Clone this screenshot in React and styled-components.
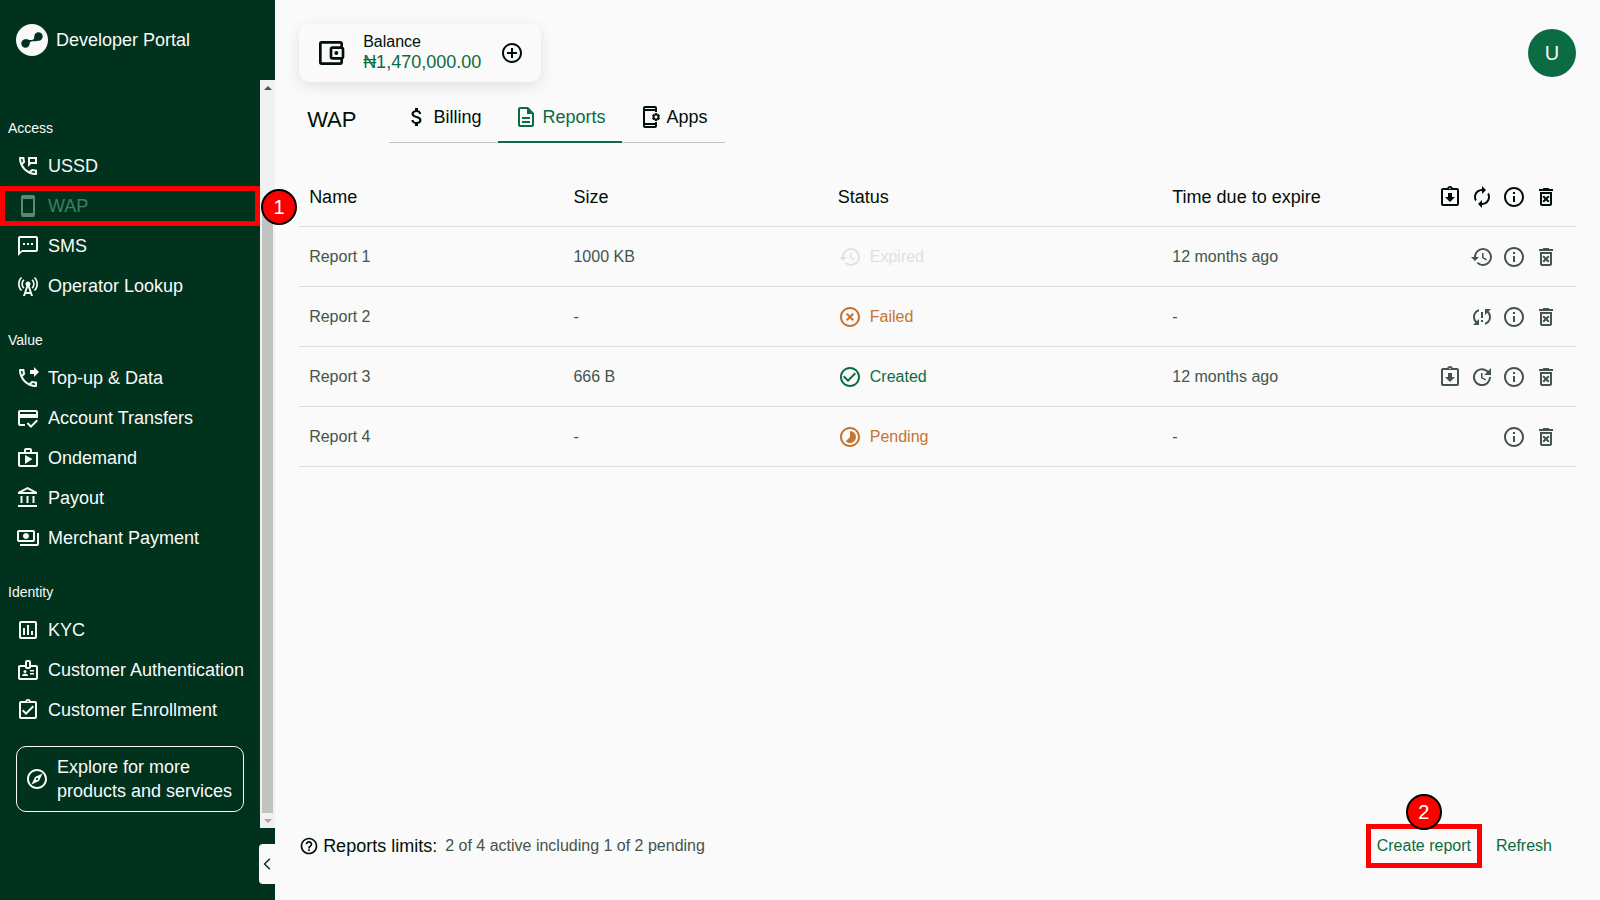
import React from "react";

import styled, { createGlobalStyle } from "styled-components";
import {
  MdOutlinePermPhoneMsg,
  MdOutlineStayCurrentPortrait,
  MdOutlineTextsms,
  MdCellTower,
  MdOutlinePhoneForwarded,
  MdOutlineCreditScore,
  MdOutlineShop,
  MdOutlineAccountBalance,
  MdOutlinePayments,
  MdOutlineAssessment,
  MdOutlineBadge,
  MdOutlineAssignmentTurnedIn,
  MdOutlineExplore,
  MdOutlineAccountBalanceWallet,
  MdAddCircleOutline,
  MdAttachMoney,
  MdOutlineDescription,
  MdOutlineAppSettingsAlt,
  MdOutlineAssignmentReturned,
  MdAutorenew,
  MdInfoOutline,
  MdOutlineDeleteForever,
  MdHistory,
  MdOutlineSyncProblem,
  MdUpdate,
  MdHighlightOff,
  MdCheckCircleOutline,
  MdOutlineTimelapse,
  MdHelpOutline,
  MdOutlineArrowBackIosNew,
} from "react-icons/md";

const GlobalStyle = createGlobalStyle`
  * {
    box-sizing: border-box;
  }

  body {
    margin: 0;
    background-color: #fafafa;
    color: #000f08;
    font-family: "Liberation Sans", Arial, sans-serif;
    font-size: 16px;
  }

  button {
    margin: 0;
    padding: 0;
    border: none;
    background: none;
    color: inherit;
    font: inherit;
    cursor: pointer;
  }

  svg {
    display: block;
    flex-shrink: 0;
  }
`;

const Page = styled.div`
  display: flex;
  min-height: 100vh;
`;

const Sidebar = styled.aside`
  display: flex;
  flex-direction: column;
  flex: 0 0 275px;
  height: 100vh;
  background-color: #00321e;
  color: #fafafa;
`;

const Brand = styled.div`
  display: flex;
  align-items: center;
  gap: 8px;
  flex: 0 0 80px;
  padding: 0 16px;
  font-size: 18px;
`;

const NavArea = styled.div`
  display: flex;
  flex: 1;
  min-height: 0;
`;

const Nav = styled.nav`
  flex: 1;
  min-width: 0;
  padding-top: 14px;
`;

const SectionTitle = styled.h2`
  margin: 0;
  padding: 24px 8px 8px;
  font-size: 14px;
  font-weight: 400;
  line-height: 20px;
`;

const NavList = styled.ul`
  margin: 0;
  padding: 0;
  list-style: none;
`;

const NavItem = styled.li`
  position: relative;
`;

const NavLink = styled.a`
  display: flex;
  align-items: center;
  gap: 8px;
  height: 40px;
  padding: 0 16px;
  color: ${({ $active }) => ($active ? "#3f8062" : "#fafafa")};
  font-size: 18px;
  text-decoration: none;
  white-space: nowrap;
  outline: ${({ $active }) => ($active ? "5px solid #f00" : "none")};
  outline-offset: -5px;

  & svg {
    color: ${({ $active }) => ($active ? "#5f8674" : "inherit")};
  }
`;

const Marker = styled.span`
  position: absolute;
  z-index: 1;
  display: flex;
  align-items: center;
  justify-content: center;
  width: 36px;
  height: 36px;
  border: 2px solid #000;
  border-radius: 50%;
  background-color: #f00;
  color: #fff;
  font-size: 20px;
`;

const NavMarker = styled(Marker)`
  top: 3px;
  left: calc(100% + 1px);
`;

const ButtonMarker = styled(Marker)`
  bottom: calc(100% - 6px);
  left: calc(50% - 18px);
`;

const Explore = styled.button`
  display: flex;
  align-items: center;
  gap: 8px;
  width: calc(100% - 32px);
  margin: 16px;
  padding: 8px;
  border: 1px solid #fafafa;
  border-radius: 10px;
  font-size: 18px;
  line-height: 24px;
  text-align: left;
`;

const ScrollTrack = styled.div`
  display: flex;
  flex-direction: column;
  align-items: center;
  flex: 0 0 15px;
  background-color: #f1f1f1;
`;

const ScrollArrow = styled.span`
  display: flex;
  align-items: center;
  justify-content: center;
  height: 15px;
  color: ${({ $dim }) => ($dim ? "#a3a9a6" : "#4c524f")};
`;

const ScrollThumb = styled.span`
  flex: 1;
  width: 11px;
  margin-top: 112px;
  background-color: #c1c3c1;
`;

const SidebarFooter = styled.div`
  display: flex;
  align-items: flex-start;
  justify-content: flex-end;
  flex: 0 0 72px;
  padding-top: 16px;
`;

const Collapse = styled.button`
  display: flex;
  align-items: center;
  justify-content: center;
  width: 16px;
  height: 40px;
  border-radius: 4px 0 0 4px;
  background-color: #fafafa;
  color: #00321e;
`;

const Main = styled.main`
  display: flex;
  flex-direction: column;
  flex: 1;
  min-width: 0;
  padding: 24px 24px 32px;
`;

const TopBar = styled.header`
  display: flex;
  align-items: center;
  justify-content: space-between;
`;

const BalanceCard = styled.section`
  display: flex;
  align-items: center;
  gap: 16px;
  height: 58px;
  padding: 0 17px 0 16px;
  border-radius: 10px;
  box-shadow: 0 4px 14px rgba(0, 0, 0, 0.1);
`;

const BalanceText = styled.div`
  min-width: 121px;
  padding-bottom: 2px;
  font-size: 16px;
  line-height: 20px;
`;

const Amount = styled.div`
  color: #0b6b43;
  font-size: 18px;
`;

const Avatar = styled.button`
  width: 48px;
  height: 48px;
  border-radius: 50%;
  background-color: #0b6b43;
  color: #fafafa;
  font-size: 20px;
`;

const TitleRow = styled.div`
  display: flex;
  align-items: center;
  gap: 33px;
  margin: 11px 0 24px;
  padding-left: 8px;
`;

const Title = styled.h1`
  margin: 0;
  padding-top: 4px;
  font-size: 22px;
  font-weight: 400;
`;

const Tabs = styled.div`
  display: flex;
  box-shadow: inset 0 -1px #c1c3c1;
`;

const Tab = styled.button`
  display: flex;
  align-items: center;
  gap: 4px;
  height: 50px;
  padding: 0 17px 0 16px;
  border-bottom: 2px solid ${({ $active }) => ($active ? "#0b6b43" : "transparent")};
  color: ${({ $active }) => ($active ? "#0b6b43" : "inherit")};
  font-size: 18px;
`;

const Table = styled.table`
  width: 100%;
  border-collapse: separate;
  border-spacing: 0;
  table-layout: fixed;

  & th,
  & td {
    height: 60px;
    padding: 1px 18px 0 10px;
    border-bottom: 1px solid #dcdddc;
    text-align: left;
  }

  & th {
    font-size: 18px;
    font-weight: 400;
  }

  & td {
    color: #44544c;
  }
`;

const Col = styled.col`
  width: ${({ $width }) => $width};
`;

const Status = styled.div`
  display: flex;
  align-items: center;
  gap: 8px;
  color: ${({ $color }) => $color};
`;

const Actions = styled.div`
  display: flex;
  justify-content: flex-end;
  gap: 8px;
`;

const Footer = styled.footer`
  display: flex;
  align-items: center;
  justify-content: space-between;
  margin-top: auto;
  padding-right: 13px;
`;

const Limits = styled.div`
  display: flex;
  align-items: center;
  gap: 4px;
  font-size: 18px;
`;

const LimitsValue = styled.span`
  margin-left: 4px;
  color: #44544c;
  font-size: 16px;
`;

const FooterActions = styled.div`
  display: flex;
  gap: 3px;
`;

const TextButton = styled.button`
  position: relative;
  height: 44px;
  padding: 0 11px;
  color: #0b6b43;
  outline: ${({ $marked }) => ($marked ? "5px solid #f00" : "none")};
  outline-offset: -5px;
`;

const sections = [
  {
    title: "Access",
    items: [
      { label: "USSD", Icon: MdOutlinePermPhoneMsg },
      { label: "WAP", Icon: MdOutlineStayCurrentPortrait, active: true },
      { label: "SMS", Icon: MdOutlineTextsms },
      { label: "Operator Lookup", Icon: MdCellTower },
    ],
  },
  {
    title: "Value",
    items: [
      { label: "Top-up & Data", Icon: MdOutlinePhoneForwarded },
      { label: "Account Transfers", Icon: MdOutlineCreditScore },
      { label: "Ondemand", Icon: MdOutlineShop },
      { label: "Payout", Icon: MdOutlineAccountBalance },
      { label: "Merchant Payment", Icon: MdOutlinePayments },
    ],
  },
  {
    title: "Identity",
    items: [
      { label: "KYC", Icon: MdOutlineAssessment },
      { label: "Customer Authentication", Icon: MdOutlineBadge },
      { label: "Customer Enrollment", Icon: MdOutlineAssignmentTurnedIn },
    ],
  },
];

const tabs = [
  { label: "Billing", Icon: MdAttachMoney },
  { label: "Reports", Icon: MdOutlineDescription, active: true },
  { label: "Apps", Icon: MdOutlineAppSettingsAlt },
];

const statuses = {
  Expired: { Icon: MdHistory, color: "#e0e1e0" },
  Failed: { Icon: MdHighlightOff, color: "#c4752f" },
  Created: { Icon: MdCheckCircleOutline, color: "#0b6b43" },
  Pending: { Icon: MdOutlineTimelapse, color: "#c4752f" },
};

const actionIcons = {
  Download: MdOutlineAssignmentReturned,
  Renew: MdAutorenew,
  Restore: MdHistory,
  Retry: MdOutlineSyncProblem,
  Update: MdUpdate,
  Info: MdInfoOutline,
  Delete: MdOutlineDeleteForever,
};

const reports = [
  {
    name: "Report 1",
    size: "1000 KB",
    status: "Expired",
    expires: "12 months ago",
    actions: ["Restore", "Info", "Delete"],
  },
  {
    name: "Report 2",
    size: "-",
    status: "Failed",
    expires: "-",
    actions: ["Retry", "Info", "Delete"],
  },
  {
    name: "Report 3",
    size: "666 B",
    status: "Created",
    expires: "12 months ago",
    actions: ["Download", "Update", "Info", "Delete"],
  },
  {
    name: "Report 4",
    size: "-",
    status: "Pending",
    expires: "-",
    actions: ["Info", "Delete"],
  },
];

const Logo = () => (
  <svg width="32" height="32" viewBox="0 0 32 32" aria-hidden="true">
    <circle cx="16" cy="16" r="16" fill="#fafafa" />
    <g fill="#00321e">
      <circle cx="9.5" cy="19.5" r="4.2" />
      <circle cx="22.5" cy="12.5" r="4.2" />
      <path d="M9 15.3C11 15.3 12 16 14 16C17 16 18.3 15.500 18.500 12.500L23 16.700C21 16.700 20 17.200 18 17.200C15 17.200 13.700 17.500 13.500 19.500Z" />
    </g>
  </svg>
);

const ReportActions = ({ names }) => (
  <Actions>
    {names.map((name) => {
      const Icon = actionIcons[name];
      return (
        <button key={name} type="button" aria-label={name}>
          <Icon size={24} />
        </button>
      );
    })}
  </Actions>
);

const SideMenu = () => (
  <Sidebar>
    <Brand>
      <Logo />
      Developer Portal
    </Brand>
    <NavArea>
      <Nav>
        {sections.map((section) => (
          <section key={section.title}>
            <SectionTitle>{section.title}</SectionTitle>
            <NavList>
              {section.items.map(({ label, Icon, active }) => (
                <NavItem key={label}>
                  <NavLink href="#" $active={active}>
                    <Icon size={24} />
                    {label}
                  </NavLink>
                  {active && <NavMarker>1</NavMarker>}
                </NavItem>
              ))}
            </NavList>
          </section>
        ))}
        <Explore type="button">
          <MdOutlineExplore size={24} />
          <span>Explore for more products and services</span>
        </Explore>
      </Nav>
      <ScrollTrack aria-hidden="true">
        <ScrollArrow>
          <svg width="8" height="4" viewBox="0 0 8 4">
            <path d="M0 4l4-4 4 4z" fill="currentColor" />
          </svg>
        </ScrollArrow>
        <ScrollThumb />
        <ScrollArrow $dim>
          <svg width="8" height="4" viewBox="0 0 8 4">
            <path d="M0 0l4 4 4-4z" fill="currentColor" />
          </svg>
        </ScrollArrow>
      </ScrollTrack>
    </NavArea>
    <SidebarFooter>
      <Collapse type="button" aria-label="Collapse menu">
        <MdOutlineArrowBackIosNew size={14} />
      </Collapse>
    </SidebarFooter>
  </Sidebar>
);

const App = () => {
  return (
    <Page>
      <GlobalStyle />
      <SideMenu />
      <Main>
        <TopBar>
          <BalanceCard>
            <MdOutlineAccountBalanceWallet size={32} />
            <BalanceText>
              Balance
              <Amount>₦1,470,000.00</Amount>
            </BalanceText>
            <button type="button" aria-label="Add funds">
              <MdAddCircleOutline size={24} />
            </button>
          </BalanceCard>
          <Avatar type="button">U</Avatar>
        </TopBar>

        <TitleRow>
          <Title>WAP</Title>
          <Tabs role="tablist">
            {tabs.map(({ label, Icon, active }) => (
              <Tab
                key={label}
                type="button"
                role="tab"
                aria-selected={Boolean(active)}
                $active={active}
              >
                <Icon size={24} />
                {label}
              </Tab>
            ))}
          </Tabs>
        </TitleRow>

        <Table>
          <colgroup>
            <Col $width="20.7%" />
            <Col $width="20.7%" />
            <Col $width="26.2%" />
            <Col $width="16.2%" />
            <Col $width="16.2%" />
          </colgroup>
          <thead>
            <tr>
              <th>Name</th>
              <th>Size</th>
              <th>Status</th>
              <th>Time due to expire</th>
              <th>
                <ReportActions names={["Download", "Renew", "Info", "Delete"]} />
              </th>
            </tr>
          </thead>
          <tbody>
            {reports.map((report) => {
              const { Icon, color } = statuses[report.status];
              return (
                <tr key={report.name}>
                  <td>{report.name}</td>
                  <td>{report.size}</td>
                  <td>
                    <Status $color={color}>
                      <Icon size={24} />
                      {report.status}
                    </Status>
                  </td>
                  <td>{report.expires}</td>
                  <td>
                    <ReportActions names={report.actions} />
                  </td>
                </tr>
              );
            })}
          </tbody>
        </Table>

        <Footer>
          <Limits>
            <MdHelpOutline size={20} />
            Reports limits:
            <LimitsValue>2 of 4 active including 1 of 2 pending</LimitsValue>
          </Limits>
          <FooterActions>
            <TextButton type="button" $marked>
              Create report
              <ButtonMarker>2</ButtonMarker>
            </TextButton>
            <TextButton type="button">Refresh</TextButton>
          </FooterActions>
        </Footer>
      </Main>
    </Page>
  );
};

export default App;
